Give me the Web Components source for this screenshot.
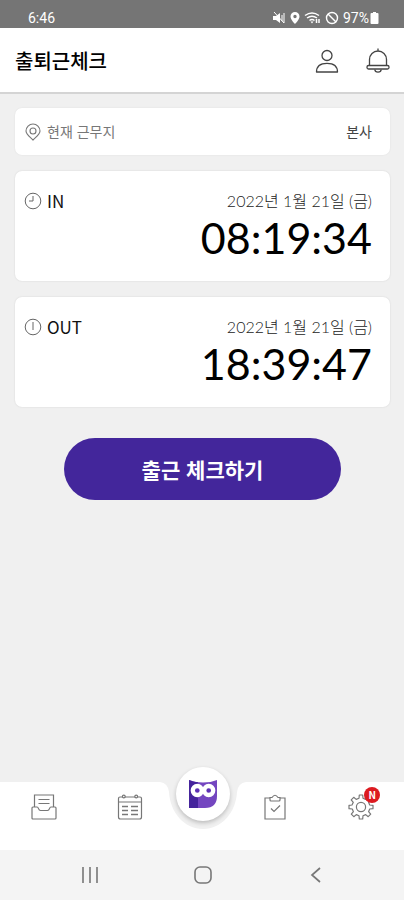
<!DOCTYPE html>
<html lang="ko">
<head>
<meta charset="utf-8">
<meta name="viewport" content="width=device-width, initial-scale=1">
<title>출퇴근체크</title>
<style>
html, body { margin: 0; }
body {
  background: #f0f0f0;
  color: #111;
  font-family: "Noto Sans CJK KR", sans-serif;
}
</style>
</head>
<body>
<attendance-app></attendance-app>

<script>
const ICONS = {
  mute: `<svg width="14" height="14" viewBox="0 0 14 14"><path d="M1 5h3l4-3v10L4 9H1z" fill="#fff"/><path d="M2 1l10 11M10 4v6M12 2v10" stroke="#fff" fill="none"/></svg>`,
  place: `<svg width="10" height="14" viewBox="0 0 10 14"><path fill="#fff" fill-rule="evenodd" d="M5 1a4.5 4.5 0 0 1 4.5 4.5C9.500 8.500 5 13 5 13S.5 8.500.5 5.500A4.500 4.500 0 0 1 5 1zm0 2.800a1.700 1.700 0 1 0 0 3.400 1.700 1.700 0 0 0 0-3.400z"/></svg>`,
  wifi: `<svg width="17" height="14" viewBox="0 0 17 14"><g fill="none" stroke="#fff" stroke-width="1.500"><path d="M1 4.500q7-5 14 0M3 7q5-3.500 10 0M5.500 9.500q2.500-2 5 0"/><path d="M12.500 8v4M15 8v4"/></g><path d="M6.500 10.500h3L8 12.500z" fill="#fff"/></svg>`,
  block: `<svg width="14" height="14" viewBox="0 0 14 14"><g fill="none" stroke="#fff" stroke-width="1.400"><circle cx="7" cy="7" r="5.500"/><path d="M3 3l8 8"/></g></svg>`,
  battery: `<svg width="9" height="14" viewBox="0 0 9 14"><path d="M3 1h3v1h1.500q1 0 1 1v9q0 1-1 1h-6q-1 0-1-1V3q0-1 1-1H3z" fill="#fff"/></svg>`,
  user: `<svg width="26" height="26" viewBox="0 0 26 26" fill="none" stroke="#444" stroke-width="1.300"><circle cx="13" cy="7.500" r="5"/><path d="M2.500 24C2.500 18.500 6.500 15.300 13 15.300S23.500 18.500 23.500 24z" stroke-linejoin="round"/></svg>`,
  bell: `<svg width="26" height="26" viewBox="0 0 26 26" fill="none" stroke="#444" stroke-width="1.300"><path d="M13 .5v2.500M4.500 17.500V11.500a8.500 8.500 0 0 1 17 0v6"/><rect x="2" y="17.500" width="22" height="3.500" rx="1.500"/><path d="M9.800 21.500c.3 3.500 6.100 3.500 6.400 0"/></svg>`,
  pin: `<svg width="16" height="18" viewBox="0 0 16 18" fill="none" stroke="#777" stroke-width="1.100"><path d="M8 1a7 7 0 0 1 7 7c0 3.500-4 6-7 9-3-3-7-5.500-7-9a7 7 0 0 1 7-7z"/><circle cx="8" cy="8" r="3"/></svg>`,
  clockIn: `<svg width="18" height="18" viewBox="0 0 18 18" fill="none" stroke="#666"><circle cx="9" cy="9" r="7.800"/><path d="M9 4v5H5"/></svg>`,
  clockOut: `<svg width="18" height="18" viewBox="0 0 18 18" fill="none" stroke="#666"><circle cx="9" cy="9" r="7.800"/><path d="M9 4v8"/></svg>`,
  inbox: `<svg width="26" height="26" viewBox="0 0 26 26" fill="none" stroke="#777" stroke-width="1.200"><path d="M3.500 13V1h19v12M7.500 5.500h11M7.500 9.500h11"/><path d="M1 14q0-1 1-1h4c2 0 1 3.500 3.500 3.500h7c2.500 0 1.500-3.500 3.500-3.500h4q1 0 1 1v10q0 1-1 1H2q-1 0-1-1z"/></svg>`,
  calendar: `<svg width="26" height="26" viewBox="0 0 26 26" fill="none" stroke="#777" stroke-width="1.200"><path d="M5.500 3H3Q1.500 3 1.500 4.500V23q0 2 2 2h19q2 0 2-2V4.500Q24.500 3 23 3h-2.500M8 3h10M1.500 8h23"/><circle cx="6.800" cy="2.500" r="1.400"/><circle cx="19.200" cy="2.500" r="1.400"/><path d="M5 12.500h6M14 12.500h7M5 16.500h6M14 16.500h7M5 20.500h6M14 20.500h7" stroke-width="1.500"/></svg>`,
  task: `<svg width="26" height="26" viewBox="0 0 26 26" fill="none" stroke="#777" stroke-width="1.200"><path d="M8 4H3v21h20V4h-5"/><path d="M8 3.500h2q3-4.500 6 0h2V6q0 1-1 1H9Q8 7 8 6z"/><path d="M9 14.500l3 3 6-6"/></svg>`,
  gear: `<svg width="26" height="26" viewBox="0 0 26 26" fill="none" stroke="#777" stroke-width="1.200" stroke-linejoin="round"><path d="M11 4.300L11.300 1h3.400l.3 3.300 2.700 1.100 2.500-2.100 2.500 2.500-2.100 2.500 1.100 2.700 3.300.3v3.400l-3.300.3-1.100 2.700 2.100 2.500-2.500 2.500-2.500-2.100-2.700 1.100-.3 3.300h-3.400l-.3-3.300-2.700-1.100-2.500 2.100-2.500-2.500 2.100-2.500-1.100-2.700L1 14.700v-3.400l3-.3 1.300-2.700-2.100-2.500 2.500-2.500 2.500 2.100z"/><circle cx="13" cy="13" r="4.600"/></svg>`,
  owl: `<svg width="30" height="30" viewBox="0 0 30 30"><path d="M1 1q6 2.500 14 2.500T29 1v16q0 12-12 12H1z" fill="#7446c0"/><path d="M1 1q4 1.700 9 2.300V29H1z" fill="#45249c"/><g fill="#5d2fb5" stroke="#fff" stroke-width="4.300"><circle cx="9.300" cy="11.500" r="4.500"/><circle cx="20.700" cy="11.500" r="4.500"/></g></svg>`,
  recents: `<svg width="18" height="18" viewBox="0 0 18 18" stroke="#777" stroke-width="1.600"><path d="M2 1v16M9 1v16M16 1v16"/></svg>`,
  home: `<svg width="18" height="18" viewBox="0 0 18 18" fill="none" stroke="#777" stroke-width="1.600"><rect x="1" y="1" width="16" height="16" rx="5"/></svg>`,
  back: `<svg width="18" height="18" viewBox="0 0 18 18" fill="none" stroke="#777" stroke-width="1.700"><path d="M13 2L5 9l8 7"/></svg>`,
};

const BUTTON_RESET = `
button {
  appearance: none;
  border: 0;
  padding: 0;
  margin: 0;
  background: none;
  font: inherit;
  color: inherit;
  cursor: pointer;
}
svg { display: block; }
`;

class StatusBar extends HTMLElement {
  constructor() {
    super();
    this.attachShadow({ mode: "open" }).innerHTML = `
<style>
:host {
  display: flex;
  justify-content: space-between;
  align-items: flex-end;
  height: 28px;
  padding: 0 25px 0 28px;
  box-sizing: border-box;
  background: #757575;
  color: #fff;
  font: 14px/20px Roboto, sans-serif;
}
.icons { display: flex; align-items: center; gap: 4px; }
.battery { display: flex; align-items: center; gap: 1px; }
svg { display: block; }
</style>
<span>6:46</span>
<div class="icons">
  ${ICONS.mute}${ICONS.place}${ICONS.wifi}${ICONS.block}
  <span class="battery">97%${ICONS.battery}</span>
</div>`;
  }
}
customElements.define("status-bar", StatusBar);

class AppHeader extends HTMLElement {
  constructor() {
    super();
    this.attachShadow({ mode: "open" }).innerHTML = `
<style>
${BUTTON_RESET}
:host {
  display: flex;
  justify-content: space-between;
  align-items: center;
  height: 66px;
  padding: 2px 13px 0 15px;
  box-sizing: border-box;
  background: #fff;
  border-bottom: 2px solid #d4d4d4;
}
h1 { margin: 0; font-size: 20px; line-height: 28px; font-weight: 500; color: #000; }
.actions { display: flex; gap: 25px; }
</style>
<h1><slot></slot></h1>
<div class="actions">
  <button type="button" aria-label="내 정보">${ICONS.user}</button>
  <button type="button" aria-label="알림">${ICONS.bell}</button>
</div>`;
  }
}
customElements.define("app-header", AppHeader);

class WorkplaceCard extends HTMLElement {
  constructor() {
    super();
    this.attachShadow({ mode: "open" }).innerHTML = `
<style>
:host {
  display: flex;
  justify-content: space-between;
  align-items: center;
  padding: 12px 18px 12px 10px;
  background: #fff;
  border-radius: 7px;
  box-shadow: 0 0 2px rgba(0,0,0,0.08);
  font-size: 14px;
  line-height: 23px;
  color: #444;
}
.label { display: flex; align-items: center; gap: 6px; color: #777; }
</style>
<span class="label">${ICONS.pin}현재 근무지</span>
<slot></slot>`;
  }
}
customElements.define("workplace-card", WorkplaceCard);

/**
 * time-card: one recorded time.
 *
 * Attributes:
 *   icon: key in ICONS
 *   label, date, time: displayed as they are
 */
class TimeCard extends HTMLElement {
  constructor() {
    super();
    this.attachShadow({ mode: "open" });
  }

  connectedCallback() {
    const get = (name) => this.getAttribute(name);
    this.shadowRoot.innerHTML = `
<style>
:host {
  display: block;
  padding: 18px 18px 18px 9px;
  background: #fff;
  border-radius: 7px;
  box-shadow: 0 0 2px rgba(0,0,0,0.12);
}
.row { display: flex; justify-content: space-between; align-items: center; }
.label {
  display: flex;
  align-items: center;
  gap: 5px;
  font-size: 17px;
  line-height: 24px;
}
.date {
  font-family: Lato, "Noto Sans CJK KR", sans-serif;
  font-size: 16px;
  line-height: 24px;
  font-weight: 300;
  color: #222;
}
time {
  display: block;
  text-align: right;
  font-family: Lato, sans-serif;
  font-size: 43px;
  line-height: 50px;
  color: #000;
}
</style>
<div class="row">
  <span class="label">${ICONS[get("icon")]}${get("label")}</span>
  <span class="date">${get("date")}</span>
</div>
<time>${get("time")}</time>`;
  }
}
customElements.define("time-card", TimeCard);

class CheckButton extends HTMLElement {
  constructor() {
    super();
    this.attachShadow({ mode: "open" }).innerHTML = `
<style>
${BUTTON_RESET}
:host { display: block; padding: 0 49px; }
button {
  width: 100%;
  height: 62px;
  border-radius: 31px;
  background: #43269b;
  color: #fff;
  font-size: 21px;
  font-weight: 700;
}
</style>
<button type="button"><slot></slot></button>`;
  }
}
customElements.define("check-button", CheckButton);

class TabBar extends HTMLElement {
  constructor() {
    super();
    this.attachShadow({ mode: "open" }).innerHTML = `
<style>
${BUTTON_RESET}
:host { display: block; }
nav {
  display: grid;
  grid-template-columns: 1fr 1fr 60px 1fr 1fr;
  justify-items: center;
  height: 68px;
  padding-left: 1px;
  background: #fff;
}
.tab { position: relative; align-self: start; margin-top: 12px; }
.center { position: relative; width: 60px; }
.notch { position: absolute; left: -13px; top: 0; }
.owl {
  position: absolute;
  left: 3px;
  top: -15px;
  display: grid;
  place-items: center;
  width: 54px;
  height: 54px;
  border-radius: 50%;
  background: #fff;
  box-shadow: 0 2px 4px rgba(0,0,0,0.22);
}
.badge {
  position: absolute;
  right: -6px;
  top: -7px;
  width: 16px;
  height: 16px;
  border-radius: 50%;
  background: #dc1a20;
  color: #fff;
  font-size: 10px;
  line-height: 16px;
  font-weight: 700;
  text-align: center;
}
</style>
<nav>
  <button type="button" class="tab" aria-label="결재함">${ICONS.inbox}</button>
  <button type="button" class="tab" aria-label="일정">${ICONS.calendar}</button>
  <div class="center">
    <svg class="notch" width="86" height="50" viewBox="0 0 86 50"><path d="M0 0Q8 1 9 10C10 30 24 47 43 47S76 30 77 10Q78 1 86 0z" fill="#f0f0f0"/></svg>
    <button type="button" class="owl" aria-label="홈">${ICONS.owl}</button>
  </div>
  <button type="button" class="tab" aria-label="업무">${ICONS.task}</button>
  <button type="button" class="tab" aria-label="설정">${ICONS.gear}<span class="badge">N</span></button>
</nav>`;
  }
}
customElements.define("tab-bar", TabBar);

class SystemNav extends HTMLElement {
  constructor() {
    super();
    this.attachShadow({ mode: "open" }).innerHTML = `
<style>
${BUTTON_RESET}
:host {
  display: grid;
  grid-template-columns: 1fr 1fr 1fr;
  place-items: center;
  height: 50px;
  padding: 0 31px 0 33px;
  background: #f4f4f4;
}
</style>
<button type="button" aria-label="최근 앱">${ICONS.recents}</button>
<button type="button" aria-label="홈 화면">${ICONS.home}</button>
<button type="button" aria-label="뒤로">${ICONS.back}</button>`;
  }
}
customElements.define("system-nav", SystemNav);

class AttendanceApp extends HTMLElement {
  constructor() {
    super();
    this.attachShadow({ mode: "open" }).innerHTML = `
<style>
:host { display: flex; flex-direction: column; min-height: 100vh; }
main {
  flex: 1;
  display: flex;
  flex-direction: column;
  gap: 16px;
  padding: 14px 14px 32px 15px;
}
check-button { margin-top: 15px; }
</style>
<status-bar></status-bar>
<app-header>출퇴근체크</app-header>
<main>
  <workplace-card>본사</workplace-card>
  <time-card icon="clockIn" label="IN" date="2022년 1월 21일 (금)" time="08:19:34"></time-card>
  <time-card icon="clockOut" label="OUT" date="2022년 1월 21일 (금)" time="18:39:47"></time-card>
  <check-button>출근 체크하기</check-button>
</main>
<tab-bar></tab-bar>
<system-nav></system-nav>`;
  }
}
customElements.define("attendance-app", AttendanceApp);
</script>
</body>
</html>
